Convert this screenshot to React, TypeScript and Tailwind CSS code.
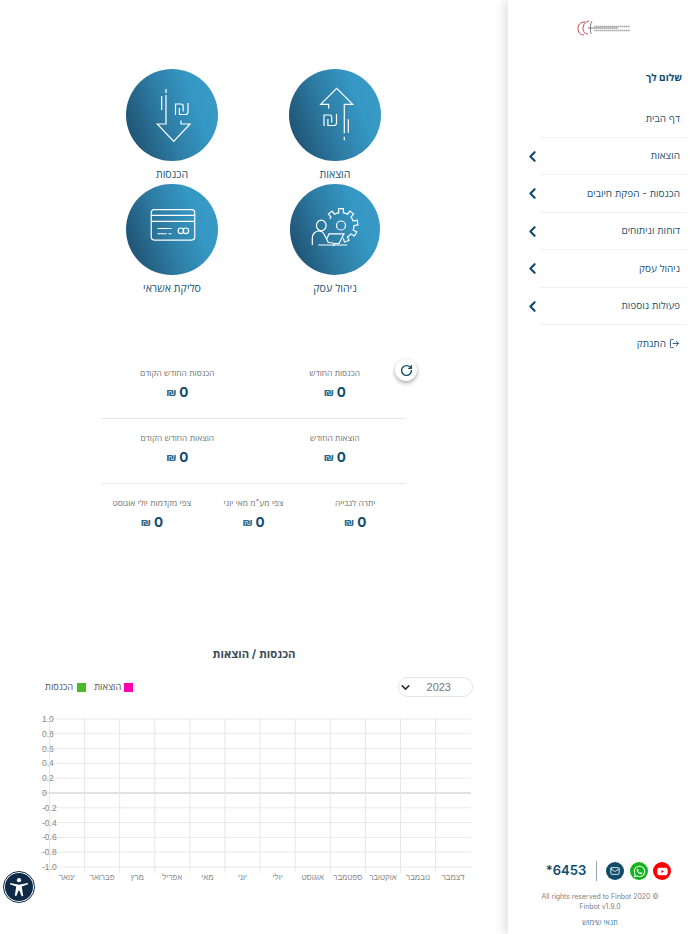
import { ChevronLeft, ChevronDown, LogOut, Mail, RotateCw } from 'lucide-react';
import { FaWhatsapp, FaYoutube } from 'react-icons/fa';

const menuItems = ['הוצאות', 'הכנסות - הפקת חיובים', 'דוחות וניתוחים', 'ניהול עסק', 'פעולות נוספות'];
const months = ['ינואר', 'פברואר', 'מרץ', 'אפריל', 'מאי', 'יוני', 'יולי', 'אוגוסט', 'ספטמבר', 'אוקטובר', 'נובמבר', 'דצמבר'];
const yLabels = ['1.0', '0.8', '0.6', '0.4', '0.2', '0', '0.2-', '0.4-', '0.6-', '0.8-', '1.0-'];

function Shekel({ x, y }: { x: number; y: number }) {
  return (
    <g transform={`translate(${x} ${y})`}>
      <path d="M0.5 12V1H6a2.2 2.2 0 0 1 2.2 2.2V8.5" />
      <path d="M13 0V9a2.5 2.5 0 0 1-2.5 2.5H4.4V5" />
    </g>
  );
}

function IncomeIcon() {
  return (
    <svg viewBox="0 0 92 92" className="h-full w-full" fill="none" stroke="white" strokeWidth="1.2">
      <path d="M40 20v4M40 26v29H31.3L47.7 72.3 64 55h-9v-3.5M35.7 27v14" />
      <Shekel x={49} y={34} />
    </svg>
  );
}

function ExpenseIcon() {
  return (
    <svg viewBox="0 0 92 92" className="h-full w-full" fill="none" stroke="white" strokeWidth="1.2">
      <path d="M39.7 39.5v-4.2h-8L47.7 19.3l16 16h-8.4v29M55.3 67.8v3.4M59.3 50.3v13.4" />
      <Shekel x={34.5} y={45} />
    </svg>
  );
}

function CardIcon() {
  return (
    <svg viewBox="0 0 92 92" className="h-full w-full" fill="none" stroke="white" strokeWidth="1.2">
      <rect x="25" y="26" width="44" height="30.7" rx="3" />
      <path d="M25 31.7h44M25 37.7h44M31.3 45h14.4M31.3 50.3h9.4M42.5 50.3h3.2" />
      <circle cx="55" cy="47.3" r="2.8" />
      <circle cx="60" cy="47.3" r="2.8" />
    </svg>
  );
}

function gearPath() {
  const cx = 51;
  const cy = 41;
  const pts: string[] = [];
  const p = (deg: number, r: number) => {
    const t = (deg * Math.PI) / 180;
    return `${(cx + r * Math.cos(t)).toFixed(1)} ${(cy + r * Math.sin(t)).toFixed(1)}`;
  };
  for (let a = -150; a <= 50; a += 40) {
    pts.push(p(a, 13), p(a + 10, 13), p(a + 12, 17), p(a + 28, 17), p(a + 30, 13));
  }
  return `M${pts.join('L')}`;
}

function BusinessIcon() {
  return (
    <svg viewBox="0 0 90 90" className="h-full w-full" fill="none" stroke="white" strokeWidth="1.2">
      <path d={gearPath()} />
      <circle cx="51" cy="41" r="4.5" />
      <ellipse cx="31.3" cy="41" rx="4.8" ry="5.3" />
      <path d="M22.3 60.5v-7c0-4 3-7 6.5-7 3 0 4.5 1.5 5.5 3.5l4 8 5 .5c1.5 0 1.5 2.6-.5 2.6" />
      <path d="M28.3 60.5h29M37 54l2-4.7h15L49 59h-5" />
    </svg>
  );
}

const tiles = [
  { label: 'הוצאות', icon: ExpenseIcon, size: 'w-[92px] h-[92px]' },
  { label: 'הכנסות', icon: IncomeIcon, size: 'w-[92px] h-[92px]' },
  { label: 'ניהול עסק', icon: BusinessIcon, size: 'w-[90px] h-[91px]' },
  { label: 'סליקת אשראי', icon: CardIcon, size: 'w-[92px] h-[91px]' },
];

function Stat({ label, className = '' }: { label: string; className?: string }) {
  return (
    <div className={`flex flex-col items-center ${className}`}>
      <p className="text-[8.4px] leading-[12px] text-[#6d7478]">{label}</p>
      <p className="mt-[3px] flex h-[20px] items-center gap-[3px] text-[#0f4c6b]">
        <span className="text-[13.5px] font-bold">0</span>
        <span className="text-[11px] font-bold text-[#2b6a88]">₪</span>
      </p>
    </div>
  );
}

function Chart() {
  return (
    <svg dir="ltr" viewBox="25 712 455 175" className="h-[175px] w-[455px]" style={{ fontFamily: '"Liberation Sans", sans-serif' }}>
      {yLabels.map((label, i) => {
        const y = 719 + i * 14.8;
        return (
          <g key={i}>
            <line x1="43" x2="471" y1={y} y2={y} stroke={i === 5 ? '#c4c4c4' : '#e9e9e9'} strokeWidth="1" />
            <text x="42" y={y + 3} textAnchor="end" fontSize="8.5" fill="#888">{label}</text>
          </g>
        );
      })}
      {months.map((month, i) => {
        const x = 49.5 + i * 35.1;
        return (
          <g key={month}>
            <line x1={x} x2={x} y1="719" y2="873" stroke="#e6e6e6" strokeWidth="1" />
            <text x={x + 17.5} y="880" textAnchor="middle" fontSize="7.8" fill="#888">{month}</text>
          </g>
        );
      })}
    </svg>
  );
}

export default function App() {
  return (
    <div dir="rtl" className="relative flex h-[934px] w-[700px] overflow-hidden bg-white font-['Inter','Open_Sans','Liberation_Sans',sans-serif]">
      {/* Sidebar */}
      <aside className="flex h-full w-[192px] shrink-0 flex-col bg-white shadow-[-4px_0_10px_rgba(0,0,0,0.12)]">
        <div className="flex justify-center pt-[20px]">
          <svg viewBox="0 0 54 16" className="h-[16px] w-[54px]" fill="none">
            <path d="M8 2C3 2 1 5 1 8.5S3 15 7 15M12 1C8 2 6 5 6 8.5S8 14 11 14" stroke="#b8383f" strokeWidth="0.9" />
            <path d="M11 8h30M15 1c-2 3-2 8-1 13" stroke="#5b4146" strokeWidth="0.7" />
            <path d="M17 6.5h36M17 10.5h36" stroke="#a8a8a8" strokeWidth="1.3" strokeDasharray="1.6 0.4" />
          </svg>
        </div>

        <p className="mt-[33px] pr-[18px] text-[10px] leading-[16px] font-bold text-[#0f4c6b]">שלום לך</p>

        <nav className="mt-[15px] mr-[13px] text-[10px] text-[#1c5470]">
          <div className="ml-[32px] flex h-[37.5px] items-center border-b border-[#f0f0f0] pr-[7px]">דף הבית</div>
          {menuItems.map(label => (
            <div key={label} className="flex h-[37.5px]">
              <div className="flex w-[147px] items-center border-b border-[#f0f0f0] pr-[7px]">{label}</div>
              <div className="flex flex-1 items-center">
                <ChevronLeft className="mr-[-1px] h-[17px] w-[17px] text-[#0f4c6b]" strokeWidth={3} />
              </div>
            </div>
          ))}
          <div className="flex h-[37.5px] items-center gap-[3px] pr-[7px]">
            <LogOut className="h-[11px] w-[11px]" />
            התנתק
          </div>
        </nav>

        <div className="mt-auto flex flex-col items-center pr-[8px] pb-[5px] text-center">
          <div className="flex items-center pl-[17px]">
            <div className="flex h-[18px] w-[18px] items-center justify-center rounded-full bg-[#ff0000]">
              <FaYoutube className="h-[11px] w-[11px] text-white" />
            </div>
            <div className="mr-[5px] flex h-[18px] w-[18px] items-center justify-center rounded-full bg-[#12b51c]">
              <FaWhatsapp className="h-[13px] w-[13px] text-white" />
            </div>
            <div className="mr-[6px] flex h-[18px] w-[18px] items-center justify-center rounded-full bg-[#0f4c6b]">
              <Mail className="h-[10px] w-[10px] text-white" />
            </div>
            <div className="mr-[9px] ml-[10px] h-[20px] w-px bg-[#9aa5ab]" />
            <span dir="ltr" className="text-[13px] font-semibold text-[#0f4c6b]">*6453</span>
          </div>
          <p className="mt-[11px] w-[150px] text-[6.9px] leading-[10px] text-[#808080]">
            <span dir="ltr" className="block">All rights reserved to Finbot 2020 ©</span>
            <span dir="ltr" className="block">Finbot v1.9.0</span>
          </p>
          <a className="mt-[5px] text-[7.6px] leading-[12px] text-[#2a7fa8]">תנאי שימוש</a>
        </div>
      </aside>

      {/* Main */}
      <main className="flex-1 pt-[68.5px]">
        <div className="mr-auto ml-[90.5px] grid w-[326px] grid-cols-2">
          {tiles.map(({ label, icon: Icon, size }) => (
            <div key={label} className="flex h-[115px] flex-col items-center">
              <div className={`${size} rounded-full bg-[linear-gradient(70deg,#1d4a68_2%,#2e7ea6_45%,#3597c3_72%,#3a9bc6_100%)]`}>
                <Icon />
              </div>
              <p className="mt-[7.5px] text-[10.6px] leading-[14px] text-[#1c5470]">{label}</p>
            </div>
          ))}
        </div>

        <div className="relative mt-[55.5px] mr-auto ml-[101px] w-[305px]">
          <button className="absolute top-[5px] right-[-11px] flex h-[22px] w-[22px] items-center justify-center rounded-full bg-white shadow-[0_2px_4px_rgba(0,0,0,0.35)]">
            <RotateCw className="h-[13px] w-[13px] text-[#0f4c6b]" strokeWidth={2.5} />
          </button>
          <div className="grid h-[65px] grid-cols-2 border-b border-[#e8e8e8] pt-[13px]">
            <Stat label="הכנסות החודש" className="pl-[10px]" />
            <Stat label="הכנסות החודש הקודם" />
          </div>
          <div className="grid h-[65px] grid-cols-2 border-b border-[#e8e8e8] pt-[13px]">
            <Stat label="הוצאות החודש" className="pl-[10px]" />
            <Stat label="הוצאות החודש הקודם" />
          </div>
          <div className="grid h-[65px] grid-cols-3 pt-[13px]">
            <Stat label="יתרה לגבייה" />
            <Stat label={'צפי מע"מ מאי יוני'} />
            <Stat label="צפי מקדמות יולי אוגוסט" />
          </div>
        </div>

        <h2 className="mt-[96px] text-center text-[11.3px] leading-[18px] font-bold text-[#3c4c57]">הכנסות / הוצאות</h2>

        <div className="mt-[14px] mr-[35px] ml-[45px] flex items-center justify-between">
          <div className="flex h-[20px] w-[75px] items-center justify-between rounded-full border border-[#e2e5e7] pr-[21px] font-['Liberation_Sans'] text-[11px] text-[#777]">
            2023
            <ChevronDown className="h-[13px] w-[13px] text-[#333]" strokeWidth={3} />
          </div>
          <div className="flex items-center text-[9.3px] text-[#555]">
            <span className="h-[9px] w-[9px] bg-[#ff00aa]" />
            <span className="mr-[3px]">הוצאות</span>
            <span className="mr-[8px] h-[9px] w-[9px] bg-[#4cb92c]" />
            <span className="mr-[4px]">הכנסות</span>
          </div>
        </div>

        <div className="mt-[15px] mr-auto ml-[25px] w-[455px]">
          <Chart />
        </div>
      </main>

      {/* Accessibility button */}
      <div className="absolute top-[871px] left-[3px] flex h-[32px] w-[32px] items-center justify-center rounded-full border-[1.5px] border-[#0e2a47] bg-white">
        <div className="flex h-[28px] w-[28px] items-center justify-center rounded-full bg-[#0e2a47]">
          <svg viewBox="0 0 24 24" className="h-[22px] w-[22px]" fill="white">
            <circle cx="12" cy="4.5" r="2.3" />
            <path d="M2.5 7.5 12 9.5l9.5-2 .5 1.6-7 2.3 1.6 10.4-1.7.4L12.6 16h-1.2l-2.3 5.8-1.7-.4L9 11.4 2 9.1z" />
          </svg>
        </div>
      </div>
    </div>
  );
}
